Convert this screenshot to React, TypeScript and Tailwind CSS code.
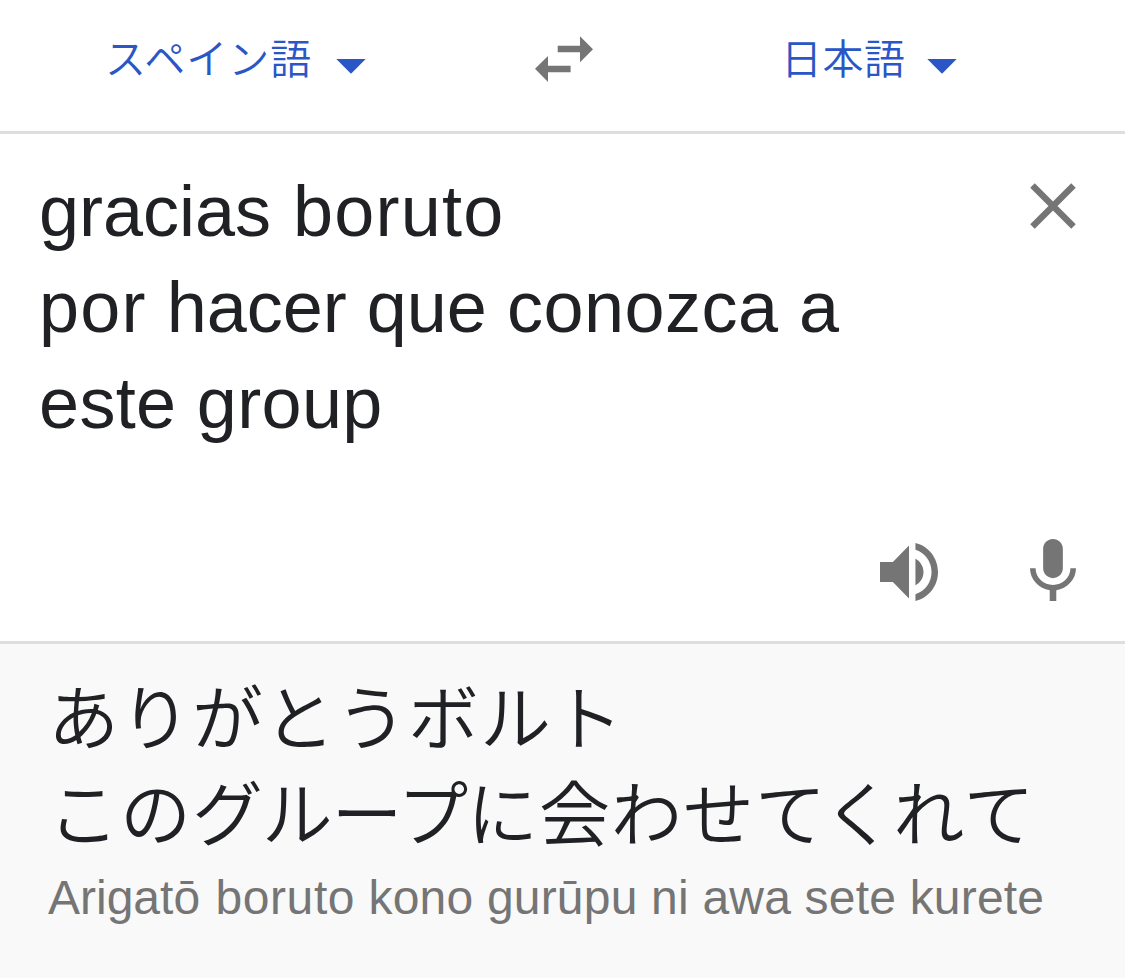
interface LanguageProps {
    name: string,
    className: string,
    textClass: string
}

function Language({ name, className, textClass }: LanguageProps) {
    return <button className={`flex items-start text-[#2a56c6] ${className}`}>
        <span className={`whitespace-nowrap text-left text-[41px] leading-[62px] font-[350] ${textClass}`}>{name}</span>
        <svg className="mt-[30px] h-[15px] w-[30px]" viewBox="0 0 30 15" fill="currentColor">
            <path d="M0.3 0h29.4L15 14.7z" />
        </svg>
    </button>;
}

export default function App() {
    return <div className="flex h-[978px] w-[1125px] flex-col overflow-hidden bg-white font-['Liberation_Sans','Noto_Sans_CJK_JP',sans-serif] text-[#202124]">
        <header className="flex h-[134px] shrink-0 items-start border-b-[3px] border-[#dedede] pt-[29px]">
            <Language name="スペイン語" className="ml-[105px] w-[430px]" textClass="w-[231px] tracking-[1px]" />
            <svg className="mt-[7px] h-[46px] w-[58px] text-[#757575]" viewBox="0 0 58 46" fill="currentColor">
                <path d="M45 0.3l13 13-13 13v-10H22.7v-6.6H45zM13 19.9v9.8h22.6v6.6H13v9.6L0 32.8z" />
            </svg>
            <Language name="日本語" className="ml-[188px]" textClass="w-[146px] tracking-[0.5px]" />
        </header>
        <section className="flex h-[510px] shrink-0 flex-col border-b-[3px] border-[#dedede]">
            <div className="flex items-start justify-between pl-[39px] pr-[49px] pt-[29px]">
                <div className="whitespace-nowrap text-[72px] leading-[96px]">
                    <p>gracias <span className="ml-[2px] tracking-[1.2px]">boruto</span></p>
                    <p><span className="tracking-[1.2px]">por</span> hacer que <span className="tracking-[0.5px]">conozca a</span></p>
                    <p className="tracking-[0.35px]">este group</p>
                </div>
                <svg className="mt-[20px] h-[46px] w-[46px] text-[#757575]" viewBox="0 0 46 46" stroke="currentColor" strokeWidth="6.4">
                    <path d="M2.5 2.5l41 41M43.5 2.5l-41 41" />
                </svg>
            </div>
            <div className="mt-[88px] flex items-start justify-end pr-[49px] text-[#757575]">
                <svg className="mt-[4px] mr-px h-[58px] w-[58px]" viewBox="3 3.23 18 17.54" preserveAspectRatio="none" fill="currentColor">
                    <path d="M3 9v6h4l5 5V4L7 9H3zm13.5 3c0-1.77-1.02-3.29-2.5-4.03v8.05c1.48-.73 2.5-2.25 2.5-4.02zM14 3.23v2.06c2.89.86 5 3.54 5 6.71s-2.11 5.85-5 6.71v2.06c4.01-.91 7-4.49 7-8.77s-2.99-7.86-7-8.77z" />
                </svg>
                <svg className="ml-[91px] h-[62px] w-[46px]" viewBox="5 2 14 19" preserveAspectRatio="none" fill="currentColor">
                    <path d="M12 14c1.66 0 2.99-1.34 2.99-3L15 5c0-1.66-1.34-3-3-3S9 3.34 9 5v6c0 1.66 1.34 3 3 3zm5.3-3c0 3-2.54 5.1-5.3 5.1S6.7 14 6.7 11H5c0 3.41 2.72 6.23 6 6.72V21h2v-3.28c3.28-.48 6-3.3 6-6.72h-1.7z" />
                </svg>
            </div>
        </section>
        <section className="flex-1 whitespace-nowrap bg-[#f9f9f9] pl-[48px] pt-[28px]">
            <div className="text-[71px] leading-[96px] tracking-[1px] font-[350]">
                <p>ありがとうボルト</p>
                <p>この<span className="tracking-[-1.2px]">グループ</span>に会わせ<span className="tracking-[-0.8px]">てくれ</span>て</p>
            </div>
            <p className="mt-[6px] text-[48px] leading-[56px] text-[#757575]">Arigatō <span className="ml-[2px] tracking-[0.6px]">boruto</span> <span className="tracking-[0.2px]">kono gurūpu ni awa sete kurete</span></p>
        </section>
    </div>;
}
